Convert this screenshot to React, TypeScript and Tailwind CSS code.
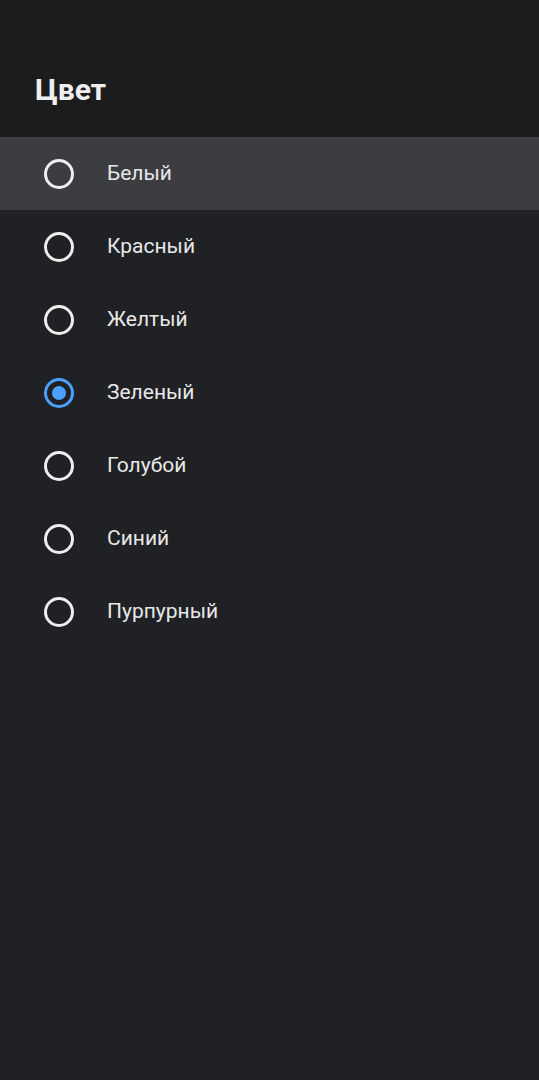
import React from "react";

const items = ["Белый", "Красный", "Желтый", "Зеленый", "Голубой", "Синий", "Пурпурный"];

export default function App() {
  return (
    <div className="min-h-[1080px] w-full bg-[#202124] flex flex-col" style={{ fontFamily: "Roboto, 'Noto Sans', sans-serif" }}>
      <div className="h-[137px] bg-[#1b1c1e] flex items-center pl-[35px] pt-[43px]">
        <span className="text-[30px] font-bold text-[#eeeeee] leading-none">Цвет</span>
      </div>
      <div className="flex flex-col">
        {items.map((it, i) => {
          const selected = i === 3;
          const focused = i === 0;
          return (
            <div key={it} className={`h-[73px] flex items-center pl-[44px] ${focused ? "bg-[#3c3d40]" : ""}`}>
              <div className={`w-[30px] h-[30px] rounded-full border-[3px] flex items-center justify-center ${selected ? "border-[#4ba0fc]" : "border-[#eeeeee]"}`}>
                {selected && <div className="w-[14px] h-[14px] rounded-full bg-[#4ba0fc]" />}
              </div>
              <span className="ml-[33px] text-[21px] text-[#e8e8e8] leading-none">{it}</span>
            </div>
          );
        })}
      </div>
    </div>
  );
}
